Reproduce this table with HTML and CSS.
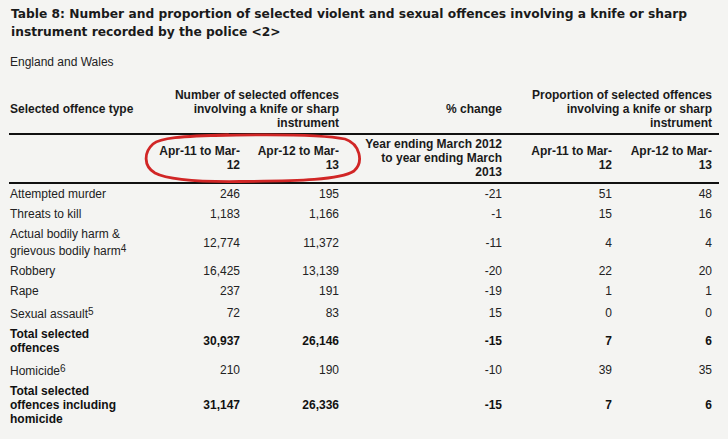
FILE: index.html
```html
<!DOCTYPE html>
<html lang="en">
<head>
<meta charset="utf-8">
<title>Table 8</title>
<link rel="stylesheet" href="styles.css">
</head>
<body>
<div class="page">
  <h1 class="title">Table 8: Number and proportion of selected violent and sexual offences involving a knife or sharp instrument recorded by the police &lt;2&gt;</h1>
  <p class="region">England and Wales</p>
  <table class="data">
    <colgroup>
      <col class="c1"><col class="c2"><col class="c3"><col class="c4"><col class="c5"><col class="c6">
    </colgroup>
    <thead>
      <tr class="head1">
        <th class="label">Selected offence type</th>
        <th class="num" colspan="2">Number of selected offences involving a knife or sharp instrument</th>
        <th class="num">% change</th>
        <th class="num" colspan="2">Proportion of selected offences involving a knife or sharp instrument</th>
      </tr>
      <tr class="head2">
        <th class="label"></th>
        <th class="num">Apr-11 to Mar-12</th>
        <th class="num">Apr-12 to Mar-13</th>
        <th class="num">Year ending March 2012 to year ending March 2013</th>
        <th class="num">Apr-11 to Mar-12</th>
        <th class="num">Apr-12 to Mar-13</th>
      </tr>
    </thead>
    <tbody>
      <tr><td class="label">Attempted murder</td><td class="num">246</td><td class="num">195</td><td class="num">-21</td><td class="num">51</td><td class="num">48</td></tr>
      <tr><td class="label">Threats to kill</td><td class="num">1,183</td><td class="num">1,166</td><td class="num">-1</td><td class="num">15</td><td class="num">16</td></tr>
      <tr><td class="label">Actual bodily harm &amp; grievous bodily harm<sup>4</sup></td><td class="num">12,774</td><td class="num">11,372</td><td class="num">-11</td><td class="num">4</td><td class="num">4</td></tr>
      <tr><td class="label">Robbery</td><td class="num">16,425</td><td class="num">13,139</td><td class="num">-20</td><td class="num">22</td><td class="num">20</td></tr>
      <tr><td class="label">Rape</td><td class="num">237</td><td class="num">191</td><td class="num">-19</td><td class="num">1</td><td class="num">1</td></tr>
      <tr><td class="label">Sexual assault<sup>5</sup></td><td class="num">72</td><td class="num">83</td><td class="num">15</td><td class="num">0</td><td class="num">0</td></tr>
      <tr class="total"><td class="label">Total selected offences</td><td class="num">30,937</td><td class="num">26,146</td><td class="num">-15</td><td class="num">7</td><td class="num">6</td></tr>
      <tr><td class="label">Homicide<sup>6</sup></td><td class="num">210</td><td class="num">190</td><td class="num">-10</td><td class="num">39</td><td class="num">35</td></tr>
      <tr class="total"><td class="label">Total selected offences including homicide</td><td class="num">31,147</td><td class="num">26,336</td><td class="num">-15</td><td class="num">7</td><td class="num">6</td></tr>
    </tbody>
  </table>
  <svg class="annotation" width="728" height="439" viewBox="0 0 728 439" aria-hidden="true">
    <path d="M 215 135.5 C 280 134, 325 135, 345 139 C 360 144, 364 162, 354 171 C 340 180, 300 181, 240 181.5 C 200 182, 168 180, 155 173 C 143 166, 144 152, 153 144 C 160 138, 180 136, 228 135" fill="none" stroke="#d12626" stroke-width="2.8" stroke-linecap="round" stroke-linejoin="round"/>
  </svg>
</div>
</body>
</html>
```

FILE: styles.css
```css
html, body {
  margin: 0;
  padding: 0;
  background: #f4f4f2;
}

.page {
  position: relative;
  width: 728px;
  height: 439px;
  overflow: hidden;
  color: #222;
  font-family: "Liberation Sans", Arial, sans-serif;
  font-size: 12px;
  line-height: 14px;
}

.title {
  margin: 0;
  padding: 5px 20px 0 11px;
  font-family: "DejaVu Sans", Verdana, sans-serif;
  font-weight: bold;
  font-size: 12.25px;
  line-height: 18px;
  color: #1a1a1a;
}

.region {
  margin: 14px 0 0 10px;
  font-size: 12px;
  line-height: 14px;
}

.data {
  margin: 16px 0 0 9px;
  width: 710px;
  table-layout: fixed;
  border-collapse: separate;
  border-spacing: 0;
}

.c1 { width: 138px; }
.c2 { width: 100px; }
.c3 { width: 99px; }
.c4 { width: 163px; }
.c5 { width: 110px; }
.c6 { width: 100px; }

.data th,
.data td {
  padding: 3px 7px 3px 4px;
  vertical-align: middle;
  font-size: 12px;
  line-height: 14px;
}

.data th {
  font-weight: bold;
  color: #1a1a1a;
}

.data th:nth-child(4),
.data td:nth-child(4) {
  padding-left: 10px;
}

.head2 th:nth-child(5),
.data td:nth-child(5) {
  padding-left: 16px;
}

.head1 th:nth-child(4) {
  padding-left: 16px;
}

.data .label {
  text-align: left;
  padding-left: 1px;
}

.data .num {
  text-align: right;
}

.head1 th,
.head2 th {
  border-bottom: 2px solid #111;
}

.head2 th {
  padding-top: 2px;
}

.total td {
  font-weight: bold;
  color: #111;
}

sup {
  font-size: 10px;
  line-height: 16px;
  vertical-align: 3px;
}

.annotation {
  position: absolute;
  left: 0;
  top: 0;
  pointer-events: none;
}
```
